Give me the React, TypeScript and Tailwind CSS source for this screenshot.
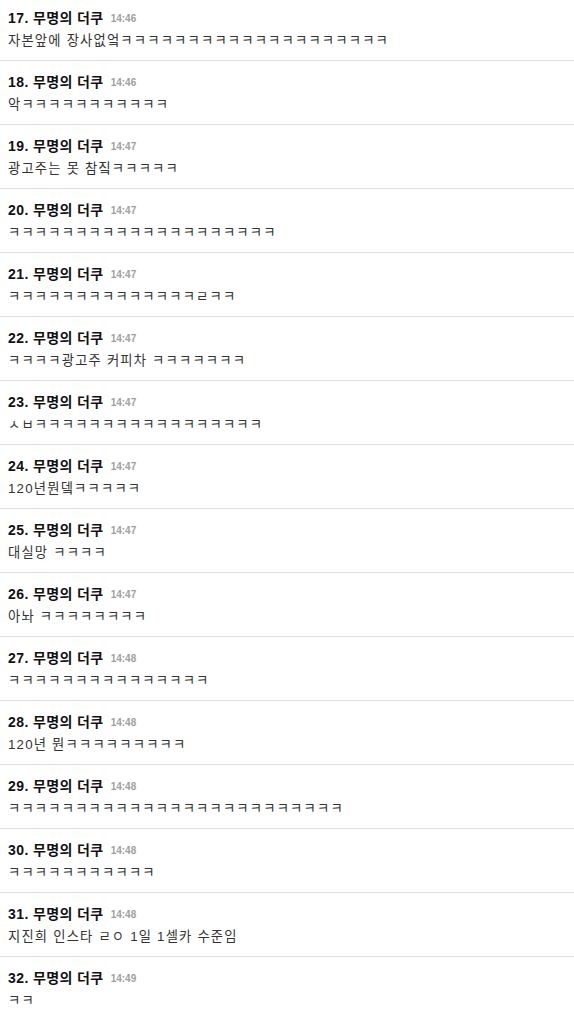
const k = (n: number) => "ㅋ".repeat(n)

interface commentProps {
  no: number
  time: string
  text: string
}

const comments: commentProps[] = [
  { no: 17, time: "14:46", text: "자본앞에 장사없엌" + k(20) },
  { no: 18, time: "14:46", text: "악" + k(11) },
  { no: 19, time: "14:47", text: "광고주는 못 참짘" + k(5) },
  { no: 20, time: "14:47", text: k(20) },
  { no: 21, time: "14:47", text: k(14) + "ㄹ" + k(2) },
  { no: 22, time: "14:47", text: k(4) + "광고주 커피차 " + k(7) },
  { no: 23, time: "14:47", text: "ㅅㅂ" + k(17) },
  { no: 24, time: "14:47", text: "120년뭔뎈" + k(5) },
  { no: 25, time: "14:47", text: "대실망 " + k(4) },
  { no: 26, time: "14:47", text: "아놔 " + k(8) },
  { no: 27, time: "14:48", text: k(15) },
  { no: 28, time: "14:48", text: "120년 뭔" + k(9) },
  { no: 29, time: "14:48", text: k(25) },
  { no: 30, time: "14:48", text: k(11) },
  { no: 31, time: "14:48", text: "지진희 인스타 ㄹㅇ 1일 1셀카 수준임" },
  { no: 32, time: "14:49", text: k(2) },
]

function Comment({ no, time, text }: commentProps) {
  return (
    <li className="flex h-[64px] flex-col border-b border-[#dddddd] px-2 pt-[12px]">
      <div className="flex h-[18px] items-center gap-[7px] overflow-hidden">
        <span className="text-[14px] font-bold leading-[18px] tracking-[0.4px] text-[#111]">{no}. 무명의 더쿠</span>
        <span className="pt-[2px] text-[10px] font-bold leading-[18px] text-[#a0a0a0]">{time}</span>
      </div>
      <p className="mt-[5px] h-[18px] overflow-hidden whitespace-nowrap text-[13.3px] leading-[18px] tracking-[1.2px] text-[#333]">
        {text}
      </p>
    </li>
  )
}

export default function App() {
  return (
    <div
      className="h-[1015px] w-[574px] overflow-hidden bg-white"
      style={{ fontFamily: '"Liberation Sans", "Noto Sans CJK KR", sans-serif' }}
    >
      <ul className="-mt-[3px]">
        {comments.map((c) => (
          <Comment key={c.no} {...c} />
        ))}
      </ul>
    </div>
  )
}
